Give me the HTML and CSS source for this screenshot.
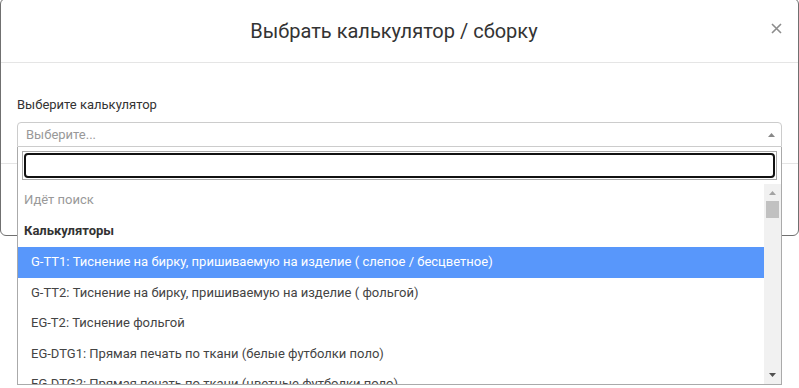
FILE: index.html
```html
<!DOCTYPE html>
<html lang="ru">
<head>
    <meta charset="UTF-8">
    <meta name="viewport" content="width=device-width, initial-scale=1.0">
    <title>Выбрать калькулятор / сборку</title>
    <link rel="stylesheet" href="styles.css">
</head>
<body>
    <div class="page">
        <div class="modal">
            <div class="modal-header">
                <h4 class="modal-title">Выбрать калькулятор / сборку</h4>
                <svg class="close" width="11" height="11" viewBox="0 0 11 11">
                    <path d="M1 1 L10 10 M10 1 L1 10" stroke="#8c8c8c" stroke-width="1.6" fill="none"/>
                </svg>
            </div>
            <div class="modal-body">
                <label class="field-label">Выберите калькулятор</label>
                <div class="select2">
                    <div class="select2-selection">
                        <span class="placeholder">Выберите...</span>
                        <svg class="arrow" width="7" height="4" viewBox="0 0 7 4">
                            <path d="M0 4 L3.5 0 L7 4 Z" fill="#888"/>
                        </svg>
                    </div>
                    <div class="select2-dropdown">
                        <div class="search-box">
                            <div class="search-field"><div class="search-ring"></div></div>
                        </div>
                        <div class="results">
                            <ul class="results-list">
                                <li class="option message">Идёт поиск</li>
                                <li class="group">
                                    <strong class="group-label">Калькуляторы</strong>
                                    <ul class="group-options">
                                        <li class="option highlighted">G-TT1: Тиснение на бирку, пришиваемую на изделие ( слепое / бесцветное)</li>
                                        <li class="option">G-TT2: Тиснение на бирку, пришиваемую на изделие ( фольгой)</li>
                                        <li class="option">EG-T2: Тиснение фольгой</li>
                                        <li class="option">EG-DTG1: Прямая печать по ткани (белые футболки поло)</li>
                                        <li class="option">EG-DTG2: Прямая печать по ткани (цветные футболки поло)</li>
                                        <li class="option">EG-DTG3: Прямая печать по ткани (белые футболки)</li>
                                    </ul>
                                </li>
                            </ul>
                            <div class="scrollbar">
                                <svg width="7" height="4" viewBox="0 0 7 4"><path d="M0 4 L3.5 0 L7 4 Z" fill="#a3a3a3"/></svg>
                                <div class="thumb"></div>
                                <svg class="down" width="7" height="4" viewBox="0 0 7 4"><path d="M0 0 L7 0 L3.5 4 Z" fill="#505050"/></svg>
                            </div>
                        </div>
                    </div>
                </div>
            </div>
            <div class="modal-footer"></div>
        </div>
    </div>
</body>
</html>
```

FILE: styles.css
```css
body {
    margin: 0;
    font-family: Roboto, "Liberation Sans", sans-serif;
    font-size: 13px;
    color: #333;
    background-color: #fff;
}

.page {
    height: 388px;
    overflow: hidden;
}

.modal {
    width: 799px;
    box-sizing: border-box;
    margin-top: -2px;
    border: 1px solid #707070;
    border-radius: 6px;
    background-color: #fff;
}

.modal-header {
    display: flex;
    align-items: flex-start;
    padding: 20px 16px 19px;
    border-bottom: 1px solid #e5e5e5;
}

.modal-title {
    flex: 1;
    margin: 0;
    text-align: center;
    font-size: 20px;
    font-weight: normal;
    line-height: 24px;
    color: #333;
}

.close {
    display: block;
    margin-top: 4px;
}

.modal-body {
    padding: 33px 16px 16px;
}

.field-label {
    display: block;
    line-height: 18px;
    margin-bottom: 8px;
}

.select2 {
    position: relative;
}

.select2-selection {
    display: flex;
    align-items: center;
    justify-content: space-between;
    height: 25px;
    box-sizing: border-box;
    padding: 0 6px 0 8px;
    border: 1px solid #ccc;
    border-radius: 4px 4px 0 0;
}

.placeholder {
    color: #999;
    line-height: 23px;
}

.arrow {
    display: block;
}

.modal-footer {
    height: 71px;
    border-top: 1px solid #e5e5e5;
}

.select2-dropdown {
    position: absolute;
    top: 100%;
    left: 0;
    right: 0;
    z-index: 10;
    background-color: #fff;
    border: 1px solid #aaa;
    border-top: none;
}

.search-box {
    padding: 4px;
}

.search-field {
    height: 29px;
    box-sizing: border-box;
    padding: 1px;
    border: 1px solid #aaa;
}

.search-ring {
    height: 100%;
    box-sizing: border-box;
    border: 2px solid #111;
    border-radius: 4px;
}

.results {
    display: flex;
    height: 200px;
}

.results-list,
.group-options {
    list-style: none;
    margin: 0;
    padding: 0;
}

.results-list {
    flex: 1;
    overflow: hidden;
}

.option {
    padding: 6px;
    line-height: 18.57px;
    color: #444;
    white-space: nowrap;
}

.option.message {
    padding-top: 7px;
    padding-bottom: 5px;
    color: #999;
}

.group-label {
    display: block;
    padding: 7px 6px 7px;
    line-height: 18.57px;
    color: #333;
}

.group-options .option {
    padding-left: 13px;
}

.option.highlighted {
    background-color: #5897fb;
    color: #fff;
}

.scrollbar {
    width: 17px;
    display: flex;
    flex-direction: column;
    align-items: center;
    padding: 7px 0 7px;
    box-sizing: border-box;
    background-color: #f1f1f1;
}

.scrollbar svg {
    display: block;
}

.thumb {
    width: 13px;
    height: 17px;
    margin-top: 6px;
    background-color: #c1c1c1;
}

.scrollbar .down {
    margin-top: auto;
}
```
